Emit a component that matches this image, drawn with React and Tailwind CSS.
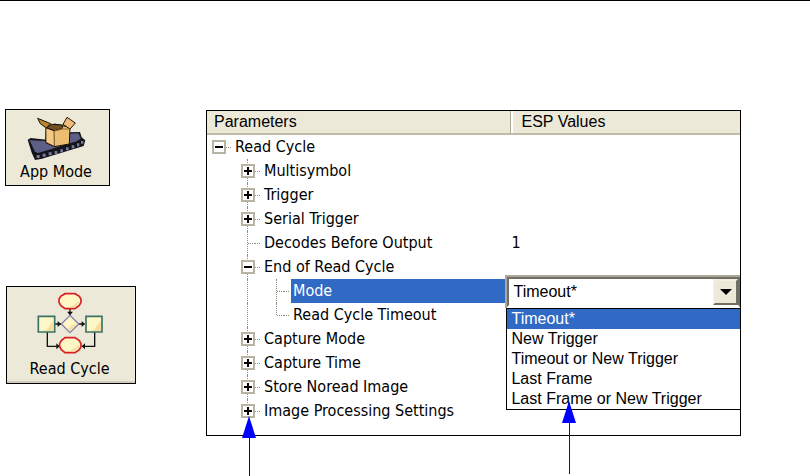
import React, { useState } from 'react';

const MODES = ['Timeout*', 'New Trigger', 'Timeout or New Trigger', 'Last Frame', 'Last Frame or New Trigger'];

const ROWS = [
  { label: 'Read Cycle', level: 0, toggle: 'minus' },
  { label: 'Multisymbol', level: 1, toggle: 'plus' },
  { label: 'Trigger', level: 1, toggle: 'plus' },
  { label: 'Serial Trigger', level: 1, toggle: 'plus' },
  { label: 'Decodes Before Output', level: 1, value: '1' },
  { label: 'End of Read Cycle', level: 1, toggle: 'minus' },
  { label: 'Mode', level: 2, editor: true },
  { label: 'Read Cycle Timeout', level: 2, last: true },
  { label: 'Capture Mode', level: 1, toggle: 'plus' },
  { label: 'Capture Time', level: 1, toggle: 'plus' },
  { label: 'Store Noread Image', level: 1, toggle: 'plus' },
  { label: 'Image Processing Settings', level: 1, toggle: 'plus', last: true },
];

function AppModeIcon() {
  return (
    <svg width="59" height="45" viewBox="81 48 177 135" aria-hidden="true">
      <path d="M83 119 L92 114 L140 119 L212 97 L240 96 L245 112 L256 121 L251 138 L126 176 L105 180 L95 158 Z" fill="#15151c" />
      <path d="M87 121 L140 123 L210 101 L236 100 L242 116 L230 124 L112 160 L103 155 Z" fill="#5d6086" />
      <path d="M88 122 L104 157 L112 160" fill="none" stroke="#111" strokeWidth="3" />
      <g fill="#777b9d">
        <path d="M110 165h9v9h-9zM128 161h9v9h-9zM146 157h9v9h-9zM164 153h8v9h-8zM181 148h8v9h-8zM198 142h8v9h-8zM215 136h8v9h-8zM231 130h7v9h-7zM243 123h7v8h-7z" />
      </g>
      <path d="M138 84 L164 72 L210 82 L208 132 L163 140 L137 128 Z" fill="#edbd72" stroke="#1a1208" strokeWidth="3" />
      <path d="M138 84 L162 92 L163 139 L138 127 Z" fill="#f7ca83" stroke="#1a1208" strokeWidth="2" />
      <path d="M140 83 L154 73 L188 75 L186 86 L163 92 Z" fill="#735022" stroke="#1a1208" strokeWidth="3" />
      <path d="M113 55 L152 71 L139 84 L121 71 Z" fill="#b88531" stroke="#1a1208" strokeWidth="3" />
      <path d="M189 73 L201 52 L226 69 L210 87 Z" fill="#f2bd7c" stroke="#1a1208" strokeWidth="3" />
      <path d="M163 93 L187 87 L209 87" fill="none" stroke="#8f642c" strokeWidth="3" />
    </svg>
  );
}

function ReadCycleIcon() {
  return (
    <svg width="68" height="62" viewBox="105 36 204 186" aria-hidden="true">
      <g fill="none" stroke="#111" strokeWidth="4">
        <path d="M207 86v18M162 132h18M234 132h16M139 156v43h36M281 156v43h-38" />
      </g>
      <path d="M198 95h18l-9 11zM170 123v18l10-9zM242 123v18l10-9zM166 190v18l10-9zM252 190v18l-10-9z" fill="#111" />
      <g fill="#fff6c6" stroke="#d81e25" strokeWidth="5">
        <path d="M192 41h30l13 8 5 9v9l-5 9-13 10h-30l-13-10-5-9v-9l5-9z" />
        <path d="M192 173h30l13 9 5 9v9l-5 9-13 9h-30l-11-9-5-9v-9l5-9z" />
      </g>
      <g fill="#fff6c6" stroke="#387269" strokeWidth="5">
        <path d="M112 109h49v47h-49zM255 109h48v47h-48z" />
      </g>
      <path d="M207 106l26 26-26 26-26-26z" fill="#fff6c6" stroke="#8580ad" strokeWidth="4" />
      <g fill="#f6dda0">
        <path d="M158 124v29h-32l14-6 8-14zM300 124v29h-32l14-6 8-14zM228 132l-21 21-6-6 12-12zM233 62v8l-12 12h-16l16-8zM234 194v8l-14 12h-16l18-10z" />
      </g>
    </svg>
  );
}

function Toggle({ kind, label }) {
  return (
    <button
      type="button"
      aria-label={label}
      aria-expanded={kind === 'minus'}
      className="relative flex size-[14px] items-center justify-center border-2 border-[#b8b4a4] bg-white"
    >
      <svg width="8" height="8" viewBox="0 0 8 8" aria-hidden="true">
        <path d="M0 3h8v2h-8z" fill="#000" />
        {kind === 'plus' && <path d="M3 0h2v8h-2z" fill="#000" />}
      </svg>
    </button>
  );
}

// One 14px tree slot with its vertical guide
function Slot({ guide, half, children }) {
  return (
    <span className="relative flex h-6 w-[14px] shrink-0 items-center">
      {guide && (
        <span className={`absolute left-[6px] top-0 border-l border-dotted border-[#8f8b78] ${half ? 'h-3' : 'h-6'}`} />
      )}
      {children || <span className="ml-[7px] w-[7px] border-t border-dotted border-[#8f8b78]" />}
    </span>
  );
}

function TreeCell({ row }) {
  return (
    <div className="flex h-6 items-center pl-[5px]">
      {row.level === 1 && <span className="w-[29px] shrink-0" />}
      {row.level === 2 && (
        <span className="flex w-[58px] shrink-0 pl-[29px]">
          <Slot guide><span /></Slot>
        </span>
      )}
      <Slot guide={row.level > 0} half={row.last}>
        {row.toggle && <Toggle kind={row.toggle} label={row.label} />}
      </Slot>
      <span className="w-[5px] shrink-0 border-t border-dotted border-[#8f8b78]" />
      <span className={`ml-[2px] flex-1 whitespace-nowrap px-[2px] leading-6 ${row.editor ? 'bg-[#316ac5] text-white' : ''}`}>
        {row.label}
      </span>
    </div>
  );
}

function ModeEditor() {
  const [mode, setMode] = useState(MODES[0]);

  return (
    <div className="absolute inset-x-0 -top-1 z-10 font-['Liberation_Sans',Arial,sans-serif] text-[16px]">
      <div className="relative h-[33px] border-2 border-r-0 border-b-0 border-[#aca899] bg-white">
        <select
          aria-label="Mode"
          value={mode}
          onChange={e => setMode(e.target.value)}
          className="block h-[30px] w-full appearance-none border-2 border-r-[#716f64] border-b-white border-l-[#716f64] border-t-[#716f64] bg-white pl-1 leading-6 outline-none"
        >
          {MODES.map(m => <option key={m}>{m}</option>)}
        </select>
        <span className="pointer-events-none absolute right-[2px] top-[2px] flex h-[26px] w-[25px] items-center justify-center border-2 border-b-[#716f64] border-l-[#f1efe2] border-r-[#716f64] border-t-[#f1efe2] bg-[#ece9d8]">
          <svg width="12" height="6" viewBox="0 0 12 6" aria-hidden="true"><path d="M0 0h12l-6 6z" fill="#000" /></svg>
        </span>
      </div>
      <ul role="listbox" aria-label="Mode options" className="ml-px border border-r-0 border-black bg-white">
        {MODES.map(m => (
          <li
            key={m}
            role="option"
            aria-selected={m === mode}
            onClick={() => setMode(m)}
            className={`h-5 whitespace-nowrap pl-1 leading-5 ${m === mode ? 'bg-[#316ac5] text-white' : ''}`}
          >
            {m}
          </li>
        ))}
      </ul>
    </div>
  );
}

function ParameterTable() {
  return (
    <table className="w-full table-fixed border-collapse">
      <thead>
        <tr className="border-b-2 border-[#bfbba7] bg-[#ece9d8] text-left font-['Liberation_Sans',Arial,sans-serif] text-[16px]">
          <th className="w-[56%] p-0 pl-[7px] font-normal leading-[22px]">Parameters</th>
          <th className="p-0 font-normal leading-[22px]">
            <span className="flex">
              <span className="w-[6px] border-r border-[#aca899]" />
              <span className="border-l-2 border-white pl-[8px]">ESP Values</span>
            </span>
          </th>
        </tr>
      </thead>
      <tbody>
        {ROWS.map(row => (
          <tr key={row.label}>
            <td className="p-0"><TreeCell row={row} /></td>
            <td className="relative p-0">
              {row.editor ? <ModeEditor /> : <span className="pl-[6px]">{row.value}</span>}
            </td>
          </tr>
        ))}
      </tbody>
    </table>
  );
}

export default function App() {
  return (
    <div className="border-t border-black bg-white font-['DejaVu_Sans_Condensed','DejaVu_Sans',sans-serif] text-[16px] text-black">
      <div className="flex items-start pr-[69px] pt-[108px] pb-[40px]">
        <div className="flex w-[206px] shrink-0 flex-col items-start gap-[100px] pl-[5px]">
          <button type="button" className="flex w-[105px] flex-col items-center border border-black bg-[#ece9d8] pb-[2px] pr-[3px] pt-[6px]">
            <AppModeIcon />
            <span className="leading-[22px]">App Mode</span>
          </button>
          <button type="button" className="ml-px flex w-[130px] flex-col items-center border border-black bg-[#ece9d8] pb-[2px] pr-[3px] pt-[5px] shadow-[inset_0_-2px_0_#d0cdbd]">
            <ReadCycleIcon />
            <span className="mt-[3px] leading-6">Read Cycle</span>
          </button>
        </div>
        <div className="relative mt-px min-w-0 flex-1 border border-black pb-[12px]">
          <ParameterTable />
          <svg className="absolute left-[35px] top-[305px] z-20" width="14" height="60" viewBox="0 0 14 60" aria-hidden="true">
            <path d="M7 0l7 22H0z" fill="#00f" />
            <path d="M7 22h1v38h-1z" fill="#0000c8" />
          </svg>
          <svg className="absolute left-[355px] top-[290px] z-20" width="14" height="74" viewBox="0 0 14 74" aria-hidden="true">
            <path d="M7 0l7 22H0z" fill="#00f" />
            <path d="M7 22h1v51h-1z" fill="#00f" />
          </svg>
        </div>
      </div>
    </div>
  );
}
